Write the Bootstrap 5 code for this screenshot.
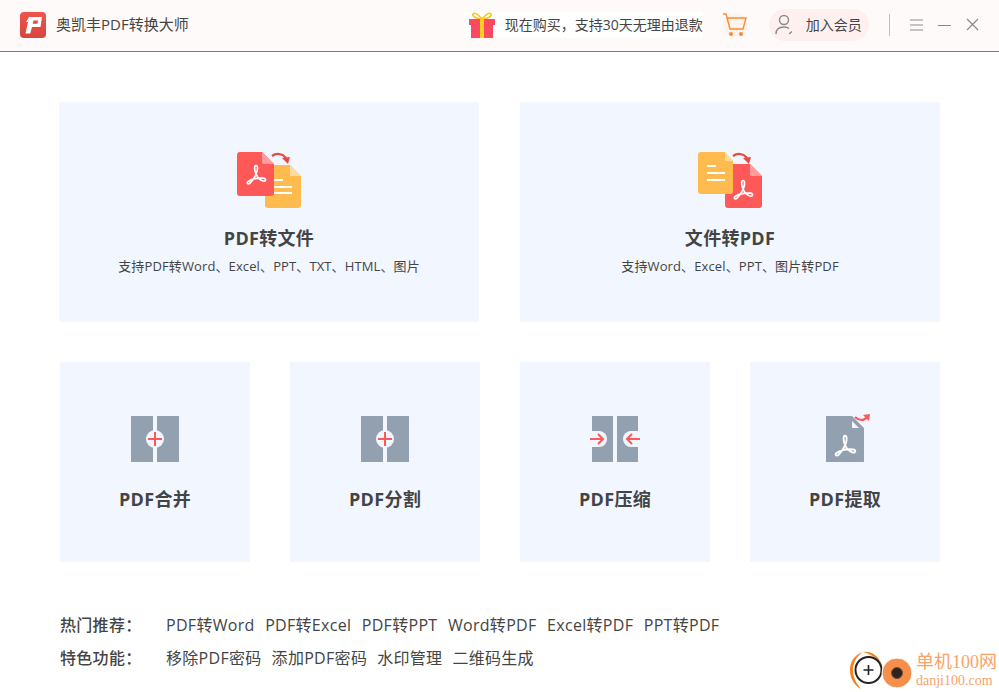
<!DOCTYPE html>
<html lang="zh-CN">
<head>
    <meta charset="UTF-8">
    <meta name="viewport" content="width=device-width, initial-scale=1.0">
    <title>奥凯丰PDF转换大师</title>
    <link href="https://cdn.jsdelivr.net/npm/bootstrap@5.3.0/dist/css/bootstrap.min.css" rel="stylesheet">
    <style>
        html, body { height: 100%; }
        body {
            font-family: "Open Sans", "Noto Sans CJK SC", sans-serif;
            color: #444;
            background: #fff;
            overflow: hidden;
        }
        .app-frame { width: 999px; height: 692px; position: relative; }
        .title-bar {
            height: 52px;
            background: #fffafa;
            border-bottom: 1px solid #d9534f;
            padding: 0 0 2px 20px;
        }
        .app-name { font-size: 15px; margin-left: 10px; color: #444; }
        .promo { font-size: 14px; margin-left: 275px; color: #444; background: #fff; height: 26px; padding-left: 5px; }
        .promo-text { margin-left: 10px; }
        .cart-wrap { margin-left: 20px; }
        .join-pill {
            width: 100px; height: 32px; margin-left: 22px;
            background: #fff0f0; border-radius: 16px;
            font-size: 14px; color: #444; padding-left: 5px;
        }
        .join-pill span { margin-left: 12px; }
        .bar-sep { width: 1px; height: 22px; background: #b8bfcc; margin-left: 20px; }
        .win-btns { margin-left: 20px; gap: 15px; }
        .work-area { padding: 50px 59px 0 60px; }
        .tile-row { gap: 40px; margin-bottom: 40px; }
        .tile-row-top { gap: 41px; margin-left: -1px; }
        .tile { background: #f2f7ff; text-align: center; }
        .tile-big { width: 420px; height: 220px; padding-top: 50px; }
        .tile-small { width: 190px; height: 200px; padding-top: 54px; }
        .tile-big svg, .tile-small svg { display: block; margin: 0 auto; overflow: visible; }
        .tile-title { font-size: 18px; font-weight: 700; color: #444; line-height: 24px; letter-spacing: .3px; }
        .tile-big .tile-title { margin-top: 18px; }
        .tile-small .tile-title { margin-top: 25px; }
        .tile-sub { font-size: 13px; color: #444; line-height: 18px; margin-top: 7px; letter-spacing: .12px; }
        .links-row { font-size: 16px; line-height: 33px; color: #444; letter-spacing: .3px; }
        .links-head { width: 106px; font-weight: 500; }
        .links-row a { color: #444; text-decoration: none; margin-right: 10.5px; }
        .links-row + .links-row a { margin-right: 10px; }
        .links-block { margin-top: 47px; }
        .site-mark { position: absolute; left: 850px; top: 648px; width: 149px; height: 44px; }
        .site-cn { position: absolute; left: 66px; top: 4px; font-family: "Liberation Serif", "Noto Sans CJK SC", serif; font-size: 18px; line-height: 20px; color: #f9a26b; white-space: nowrap; }
        .site-en { position: absolute; left: 66px; top: 25px; font-family: "Liberation Serif", serif; font-size: 14px; line-height: 16px; color: #f9a26b; white-space: nowrap; }
    </style>
</head>
<body>
<div class="app-frame">
    <div class="title-bar d-flex align-items-center">
        <svg width="26" height="26" viewBox="0 0 26 26">
            <defs>
                <linearGradient id="logoFill" x1="0" y1="0" x2="0" y2="1">
                    <stop offset="0" stop-color="#f0534a"/>
                    <stop offset="1" stop-color="#d9443c"/>
                </linearGradient>
            </defs>
            <rect width="26" height="26" rx="4" fill="url(#logoFill)"/>
            <path d="M9 5h13l-1.500 10h-8.500l-1.800 6.500H5.500L8 10H6z" fill="#fff"/>
            <path d="M13.500 8.500h4.500l-.6 3.200h-4.700z" fill="#e8483f"/>
        </svg>
        <span class="app-name">奥凯丰PDF转换大师</span>
        <div class="promo d-flex align-items-center">
            <svg width="26" height="26" viewBox="0 0 26 26">
                <path d="M13 7C9 2 5 0 4 2s3 5 9 5c6 0 10-3 9-5s-5 0-9 5z" fill="none" stroke="#f8c71c" stroke-width="1.600"/>
                <rect y="7" width="26" height="6" fill="#f94a62"/>
                <rect x="2" y="13" width="22" height="13" fill="#f94a62"/>
                <rect x="11" y="7" width="4" height="19" fill="#fbd020"/>
            </svg>
            <span class="promo-text">现在购买，支持30天无理由退款</span>
        </div>
        <div class="cart-wrap">
            <svg width="24" height="24" viewBox="0 0 24 24" fill="none" stroke="#ff8a2b" stroke-width="1.400">
                <circle cx="12" cy="12" r="12" fill="#fff3f0" stroke="none"/>
                <path d="M0 1h3l4 15h13l3-11H4.500"/>
                <circle cx="8" cy="21" r="1.300" fill="#ff8a2b"/>
                <circle cx="18" cy="21" r="1.300" fill="#ff8a2b"/>
            </svg>
        </div>
        <div class="join-pill d-flex align-items-center">
            <svg width="20" height="22" viewBox="0 0 20 22" fill="none" stroke="#8a8a8a" stroke-width="1.400">
                <circle cx="10" cy="6" r="4.500"/>
                <path d="M2 20c0-5 3-7 8-7 2 0 4 .5 5 1.500"/>
                <path d="M15 20l3-2.500"/>
            </svg>
            <span>加入会员</span>
        </div>
        <div class="bar-sep"></div>
        <div class="win-btns d-flex align-items-center">
            <svg width="13" height="12" viewBox="0 0 13 12" stroke="#8a8a8a"><path d="M0 1h13M0 6h13M0 11h13"/></svg>
            <svg width="13" height="12" viewBox="0 0 13 12" stroke="#8a8a8a"><path d="M0 6.500h13"/></svg>
            <svg width="13" height="13" viewBox="0 0 13 13" stroke="#8a8a8a" stroke-width="1.200"><path d="M1 1l11 11M12 1L1 12"/></svg>
        </div>
    </div>

    <div class="work-area">
        <svg width="0" height="0" class="position-absolute">
            <defs>
                <symbol id="acro" viewBox="0 0 24 24">
                    <path d="M12 2.500c-2 0-1.500 5 0 8.500 1.500 3.500 4 6 7 7 3 .8 3.500-2.500.5-2.800-5-.5-11 .5-15 3-2.500 1.500-.5 3.800 1.500 2 2.500-2.500 8-10 7.500-15.700-.1-1.500-.5-2-1.500-2z" fill="none" stroke="#fff" stroke-width="1.700"/>
                </symbol>
            </defs>
        </svg>

        <div class="tile-row tile-row-top d-flex">
            <div class="tile tile-big">
                <svg width="64" height="56" viewBox="0 0 64 56">
                    <path d="M28 13h25l11 11v29a3 3 0 0 1-3 3H31a3 3 0 0 1-3-3z" fill="#ffbb4d"/>
                    <path d="M53 13l11 11h-11z" fill="#ffdc9e"/>
                    <path d="M37 28h9M37 35h18M37 41h18" stroke="#fff" stroke-width="2"/>
                    <path d="M3 0h22l12 12v29a3 3 0 0 1-3 3H3a3 3 0 0 1-3-3V3a3 3 0 0 1 3-3z" fill="#fe5858"/>
                    <path d="M25 0l12 12h-10a2 2 0 0 1-2-2z" fill="#ff9e9e"/>
                    <use href="#acro" x="7" y="11" width="24" height="24"/>
                    <path d="M35 4c4-3 10-3 14 2" fill="none" stroke="#e8483f" stroke-width="2.200"/>
                    <path d="M45 6l8-1-2 7z" fill="#e8483f"/>
                </svg>
                <div class="tile-title">PDF转文件</div>
                <div class="tile-sub">支持PDF转Word、Excel、PPT、TXT、HTML、图片</div>
            </div>
            <div class="tile tile-big">
                <svg width="64" height="56" viewBox="0 0 64 56">
                    <path d="M30 12h22l12 12v29a3 3 0 0 1-3 3H30a3 3 0 0 1-3-3V12z" fill="#fe5858"/>
                    <path d="M52 12l12 12h-10a2 2 0 0 1-2-2z" fill="#ff9e9e"/>
                    <path d="M3 0h24l8 9v30a3 3 0 0 1-3 3H3a3 3 0 0 1-3-3V3a3 3 0 0 1 3-3z" fill="#ffbb4d"/>
                    <path d="M27 0l8 9h-8z" fill="#ffdc9e"/>
                    <path d="M9 14h9M9 21h18M9 28h18" stroke="#fff" stroke-width="2"/>
                    <use href="#acro" x="33" y="26" width="24" height="24"/>
                    <path d="M35 4c4-3 10-3 14 2" fill="none" stroke="#e8483f" stroke-width="2.200"/>
                    <path d="M45 6l8-1-2 7z" fill="#e8483f"/>
                </svg>
                <div class="tile-title">文件转PDF</div>
                <div class="tile-sub">支持Word、Excel、PPT、图片转PDF</div>
            </div>
        </div>

        <div class="tile-row d-flex">
            <div class="tile tile-small">
                <svg width="48" height="46" viewBox="0 0 48 46">
                    <rect width="22" height="46" fill="#93a0b0"/>
                    <rect x="26" width="22" height="46" fill="#93a0b0"/>
                    <circle cx="24" cy="23" r="9" fill="#f2f7ff"/>
                    <path d="M17 23h14M24 16v14" stroke="#fe5858" stroke-width="2"/>
                </svg>
                <div class="tile-title">PDF合并</div>
            </div>
            <div class="tile tile-small">
                <svg width="48" height="46" viewBox="0 0 48 46">
                    <rect width="22" height="46" fill="#93a0b0"/>
                    <rect x="26" width="22" height="46" fill="#93a0b0"/>
                    <circle cx="24" cy="23" r="9" fill="#f2f7ff"/>
                    <path d="M17 23h14M24 16v14" stroke="#fe5858" stroke-width="2"/>
                </svg>
                <div class="tile-title">PDF分割</div>
            </div>
            <div class="tile tile-small">
                <svg width="50" height="46" viewBox="0 0 50 46">
                    <rect x="2" width="21" height="46" fill="#93a0b0"/>
                    <rect x="27" width="21" height="46" fill="#93a0b0"/>
                    <path d="M9 15a8 8 0 0 1 0 16H2V15z" fill="#f2f7ff"/>
                    <path d="M41 15a8 8 0 0 0 0 16h7V15z" fill="#f2f7ff"/>
                    <path d="M0 23h13M8 18l5 5-5 5M50 23H37M42 18l-5 5 5 5" fill="none" stroke="#fe5858" stroke-width="2"/>
                </svg>
                <div class="tile-title">PDF压缩</div>
            </div>
            <div class="tile tile-small">
                <svg width="48" height="46" viewBox="0 0 48 46">
                    <path d="M5 0h26l12 12v34H5z" fill="#93a0b0"/>
                    <path d="M31 5l7 7h-7z" fill="#f2f7ff"/>
                    <use href="#acro" x="11" y="17" width="26" height="26"/>
                    <path d="M34 1c4 4 9 4 12 0" fill="none" stroke="#fe5858" stroke-width="2.200"/>
                    <path d="M42-1l7-1-1 7z" fill="#fe5858"/>
                </svg>
                <div class="tile-title">PDF提取</div>
            </div>
        </div>

        <div class="links-block">
            <div class="links-row d-flex">
                <div class="links-head">热门推荐：</div>
                <a href="#">PDF转Word</a><a href="#">PDF转Excel</a><a href="#">PDF转PPT</a><a href="#">Word转PDF</a><a href="#">Excel转PDF</a><a href="#">PPT转PDF</a>
            </div>
            <div class="links-row d-flex">
                <div class="links-head">特色功能：</div>
                <a href="#">移除PDF密码</a><a href="#">添加PDF密码</a><a href="#">水印管理</a><a href="#">二维码生成</a>
            </div>
        </div>
    </div>

    <div class="site-mark">
        <svg width="64" height="44" viewBox="0 0 64 44">
            <path d="M13 4C4 7 0 14 0 22c0 9 5 16 11 19-4-5-8-11-8-19 0-8 4-14 10-18z" fill="#f58220"/>
            <path d="M13 4c8-1 15 3 19 13-5-7-11-11-19-13z" fill="#f58220"/>
            <circle cx="18.500" cy="22" r="13" fill="#fff" stroke="#222" stroke-width="2"/>
            <path d="M13.500 22h10M18.500 17v10" stroke="#222" stroke-width="1.600"/>
            <circle cx="47" cy="25" r="15" fill="#f58f4b" stroke="#fff" stroke-width="1"/>
            <circle cx="47" cy="25" r="5.500" fill="#2b2320" stroke="#7a4a2a" stroke-width="1"/>
        </svg>
        <span class="site-cn">单机100网</span>
        <span class="site-en">danji100.com</span>
    </div>
</div>
<script src="https://cdn.jsdelivr.net/npm/bootstrap@5.3.0/dist/js/bootstrap.bundle.min.js"></script>
</body>
</html>
